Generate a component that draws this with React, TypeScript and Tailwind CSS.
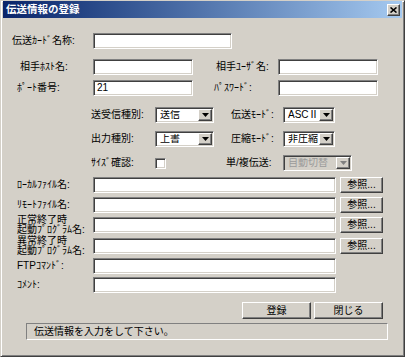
import React from "react";

const sunken =
  "border border-t-[#808080] border-l-[#808080] border-b-white border-r-white shadow-[inset_1px_1px_0_#404040,inset_-1px_-1px_0_#d4d0c8]";
const raised =
  "border border-t-white border-l-white border-b-[#404040] border-r-[#404040] shadow-[inset_-1px_-1px_0_#808080]";

function Input({ w, value }: { w: string; value?: string }) {
  return (
    <div className={`${w} h-[16px] bg-white ${sunken} flex items-center pl-[3px] text-black`}>
      {value}
    </div>
  );
}

function Arrow({ disabled }: { disabled?: boolean }) {
  return (
    <div className={`w-[14px] h-full shrink-0 bg-[#d4d0c8] ${raised} flex items-center justify-center`}>
      <svg width="7" height="4" viewBox="0 0 7 4">
        <path d="M0 0H7L3.5 4Z" fill={disabled ? "#808080" : "#000"} />
      </svg>
    </div>
  );
}

function Select({ w, value, disabled }: { w: string; value: string; disabled?: boolean }) {
  return (
    <div
      className={`${w} h-[16px] ${disabled ? "bg-[#d4d0c8] text-[#9a9a9a]" : "bg-white text-black"} ${sunken} flex items-center p-[1px]`}
    >
      <div className="flex-1 min-w-0 overflow-hidden pl-[3px] leading-none">{value}</div>
      <Arrow disabled={disabled} />
    </div>
  );
}

function Button({ w, h, label }: { w: string; h: string; label: string }) {
  return (
    <div className={`${w} ${h} bg-[#d4d0c8] ${raised} flex items-center justify-center text-black`}>
      {label}
    </div>
  );
}

export default function App() {
  return (
    <div className="w-[408px] h-[361px] bg-white font-['Liberation_Sans','Noto_Sans_CJK_JP',sans-serif] text-[10px] text-black leading-none whitespace-nowrap">
      <div className="w-[405px] h-[357px] bg-[#d4d0c8] border border-t-[#d4d0c8] border-l-[#d4d0c8] border-b-[#404040] border-r-[#404040] shadow-[inset_1px_1px_0_white,inset_-1px_-1px_0_#808080] flex flex-col">
        {/* Title bar */}
        <div className="mx-[2px] h-[17px] bg-gradient-to-r from-[#0a246a] to-[#a6caf0] flex items-center justify-between">
          <span className="ml-[3px] text-white font-bold text-[10.5px]">伝送情報の登録</span>
          <div className={`mr-[2px] w-[13px] h-[12px] bg-[#d4d0c8] ${raised} flex items-center justify-center`}>
            <svg width="7" height="6" viewBox="0 0 7 6">
              <path d="M0.5 0.5L6.5 5.5M6.5 0.5L0.5 5.5" stroke="#000" strokeWidth="1.6" />
            </svg>
          </div>
        </div>

        {/* Row 1 */}
        <div className="flex items-center h-[16px] mt-[15px]">
          <span className="ml-[11px] w-[81px]">伝送ｶｰﾄﾞ名称:</span>
          <Input w="w-[139px]" />
        </div>

        {/* Row 2 */}
        <div className="flex items-center h-[16px] mt-[10px]">
          <span className="ml-[19px] w-[73px]">相手ﾎｽﾄ名:</span>
          <Input w="w-[100px]" />
          <span className="ml-[23px] w-[62px]">相手ﾕｰｻﾞ名:</span>
          <Input w="w-[100px]" />
        </div>

        {/* Row 3 */}
        <div className="flex items-center h-[16px] mt-[5px]">
          <span className="ml-[16px] w-[76px]">ﾎﾟｰﾄ番号:</span>
          <Input w="w-[100px]" value="21" />
          <span className="ml-[21px] w-[64px]">ﾊﾟｽﾜｰﾄﾞ:</span>
          <Input w="w-[100px]" />
        </div>

        {/* Row 4 */}
        <div className="flex items-center h-[16px] mt-[11px]">
          <span className="ml-[90px] w-[64px]">送受信種別:</span>
          <Select w="w-[59px]" value="送信" />
          <span className="ml-[17px] w-[52px]">伝送ﾓｰﾄﾞ:</span>
          <Select w="w-[52px]" value="ASCⅡ" />
        </div>

        {/* Row 5 */}
        <div className="flex items-center h-[16px] mt-[8px]">
          <span className="ml-[90px] w-[64px]">出力種別:</span>
          <Select w="w-[59px]" value="上書" />
          <span className="ml-[17px] w-[52px]">圧縮ﾓｰﾄﾞ:</span>
          <Select w="w-[52px]" value="非圧縮" />
        </div>

        {/* Row 6 */}
        <div className="flex items-center h-[16px] mt-[8px]">
          <span className="ml-[90px] w-[64px]">ｻｲｽﾞ確認:</span>
          <div className={`w-[11px] h-[11px] bg-white ${sunken}`} />
          <span className="ml-[60px] w-[57px]">単/複伝送:</span>
          <Select w="w-[69px]" value="自動切替" disabled />
        </div>

        {/* Row 7 */}
        <div className="flex items-center h-[16px] mt-[6px]">
          <span className="ml-[16px] w-[76px]">ﾛｰｶﾙﾌｧｲﾙ名:</span>
          <Input w="w-[243px]" />
          <Button w="w-[43px] ml-[4px]" h="h-[16px]" label="参照..." />
        </div>

        {/* Row 8 */}
        <div className="flex items-center h-[16px] mt-[4px]">
          <span className="ml-[16px] w-[76px]">ﾘﾓｰﾄﾌｧｲﾙ名:</span>
          <Input w="w-[243px]" />
          <Button w="w-[43px] ml-[4px]" h="h-[16px]" label="参照..." />
        </div>

        {/* Row 9 */}
        <div className="flex items-center h-[16px] mt-[4px]">
          <span className="ml-[16px] w-[76px] leading-[10px] flex flex-col">
            <span>正常終了時</span>
            <span>起動ﾌﾟﾛｸﾞﾗﾑ名:</span>
          </span>
          <Input w="w-[243px]" />
          <Button w="w-[43px] ml-[4px]" h="h-[16px]" label="参照..." />
        </div>

        {/* Row 10 */}
        <div className="flex items-center h-[16px] mt-[5px]">
          <span className="ml-[16px] w-[76px] leading-[10px] flex flex-col">
            <span>異常終了時</span>
            <span>起動ﾌﾟﾛｸﾞﾗﾑ名:</span>
          </span>
          <Input w="w-[243px]" />
          <Button w="w-[43px] ml-[4px]" h="h-[16px]" label="参照..." />
        </div>

        {/* Row 11 */}
        <div className="flex items-center h-[16px] mt-[4px]">
          <span className="ml-[16px] w-[76px]">FTPｺﾏﾝﾄﾞ:</span>
          <Input w="w-[243px]" />
        </div>

        {/* Row 12 */}
        <div className="flex items-center h-[16px] mt-[3px]">
          <span className="ml-[16px] w-[76px]">ｺﾒﾝﾄ:</span>
          <Input w="w-[243px]" />
        </div>

        {/* Buttons */}
        <div className="flex items-center h-[17px] mt-[9px]">
          <Button w="w-[69px] ml-[241px]" h="h-[17px]" label="登録" />
          <Button w="w-[69px] ml-[3px]" h="h-[17px]" label="閉じる" />
        </div>

        {/* Status bar */}
        <div className="flex items-center h-[17px] mt-[4px]">
          <div className="ml-[25px] w-[362px] h-[17px] border border-t-[#808080] border-l-[#808080] border-b-white border-r-white flex items-center pl-[7px]">
            伝送情報を入力をして下さい。
          </div>
        </div>
      </div>
    </div>
  );
}
